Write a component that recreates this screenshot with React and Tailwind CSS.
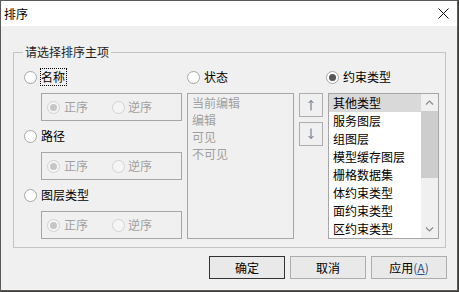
import React from 'react'

const font = { fontFamily: '"Noto Sans CJK SC", "Microsoft YaHei", sans-serif' }

function Radio({ checked, disabled }) {
    const ring = disabled ? 'border-[#d2d2d2] bg-[#f5f5f5]' : 'border-[#a6a6a6] bg-white'
    const dot = disabled ? 'bg-[#c6c6c6]' : 'bg-[#555555]'
    return (
        <span className={`flex h-[13px] w-[13px] shrink-0 items-center justify-center rounded-full border ${ring}`}>
            {checked && <span className={`h-[7px] w-[7px] rounded-full ${dot}`} />}
        </span>
    )
}

function RadioRow({ label, checked, focused }) {
    return (
        <div className="flex h-[16px] items-center">
            <Radio checked={checked} />
            <span className={`ml-[3px] flex h-[18px] items-center border pr-[1px] leading-[16px] text-black ${focused ? 'border-dotted border-black' : 'border-transparent'}`}>
                {label}
            </span>
        </div>
    )
}

function OrderBox() {
    return (
        <div className="ml-[17px] mt-[8px] flex h-[28px] w-[141px] items-center border border-[#a6a6a6] pl-[5px] text-[#a0a0a0]">
            <div className="flex w-[65px] items-center">
                <Radio checked disabled />
                <span className="ml-[4px]">正序</span>
            </div>
            <div className="flex items-center">
                <Radio disabled />
                <span className="ml-[3px]">逆序</span>
            </div>
        </div>
    )
}

function Arrow({ up }) {
    return (
        <svg width="8" height="12" viewBox="0 0 8 12" fill="none" stroke="#5f6b7a" strokeWidth="1">
            {up ? (
                <path d="M4 1.5V11.5M1.5 4L4 1.5L6.5 4" />
            ) : (
                <path d="M4 0.5V10.5M1.5 8L4 10.5L6.5 8" />
            )}
        </svg>
    )
}

function Chevron({ up }) {
    return (
        <svg width="9" height="5" viewBox="0 0 9 5" fill="none" stroke="#8a8a8a" strokeWidth="1.2">
            {up ? <path d="M1 4.5L4.5 1L8 4.5" /> : <path d="M1 0.5L4.5 4L8 0.5" />}
        </svg>
    )
}

const types = ['其他类型', '服务图层', '组图层', '模型缓存图层', '栅格数据集', '体约束类型', '面约束类型', '区约束类型']
const states = ['当前编辑', '编辑', '可见', '不可见']

export default function App() {
    return (
        <div className="h-[292px] w-[459px] bg-[#3f3e38] text-[12px]" style={font}>
            <div className="flex h-[291px] w-[458px] flex-col border border-[#5a5a5a] bg-[#f0f0f0]">
                <div className="flex h-[25px] items-center justify-between bg-white pl-[3px] pr-[8px] text-black">
                    <span className="leading-[16px]">排序</span>
                    <svg width="11" height="11" viewBox="0 0 11 11" stroke="#111" strokeWidth="1">
                        <path d="M0.5 0.5L10.5 10.5M10.5 0.5L0.5 10.5" />
                    </svg>
                </div>

                <fieldset className="ml-[12px] mt-[18px] h-[204px] w-[433px] border border-[#c4c4c4]">
                    <legend className="ml-[9px] px-[2px] leading-[16px] text-[#222]">请选择排序主项</legend>
                    <div className="mt-[9px] flex pl-[10px]">
                        <div className="w-[158px]">
                            <RadioRow label="名称" focused />
                            <OrderBox />
                            <div className="mt-[7px]">
                                <RadioRow label="路径" />
                            </div>
                            <OrderBox />
                            <div className="mt-[7px]">
                                <RadioRow label="图层类型" />
                            </div>
                            <OrderBox />
                        </div>

                        <div className="ml-[5px] w-[107px]">
                            <RadioRow label="状态" />
                            <div className="mt-[8px] h-[146px] border border-[#a6a6a6] pl-[4px] leading-[17px] text-[#a0a0a0]">
                                {states.map((s) => (
                                    <div key={s}>{s}</div>
                                ))}
                            </div>
                        </div>

                        <div className="ml-[5px] flex w-[24px] flex-col gap-[5px] pt-[24px]">
                            <div className="flex h-[24px] items-center justify-center border border-[#adadad] bg-[#f0f0f0]">
                                <Arrow up />
                            </div>
                            <div className="flex h-[24px] items-center justify-center border border-[#adadad] bg-[#f0f0f0]">
                                <Arrow />
                            </div>
                        </div>

                        <div className="ml-[3px]">
                            <RadioRow label="约束类型" checked />
                            <div className="ml-[2px] mt-[8px] flex h-[146px] w-[111px] border border-[#a6a6a6] bg-white">
                                <div className="flex-1 overflow-hidden">
                                    {types.map((t, i) => (
                                        <div key={t} className={`h-[18px] pl-[4px] leading-[18px] text-black ${i === 0 ? 'bg-[#d9d9d9]' : ''}`}>
                                            {t}
                                        </div>
                                    ))}
                                </div>
                                <div className="flex w-[17px] flex-col bg-[#f0f0f0]">
                                    <div className="flex h-[17px] items-center justify-center">
                                        <Chevron up />
                                    </div>
                                    <div className="h-[67px] bg-[#cdcdcd]" />
                                    <div className="flex-1" />
                                    <div className="flex h-[17px] items-center justify-center">
                                        <Chevron />
                                    </div>
                                </div>
                            </div>
                        </div>
                    </div>
                </fieldset>

                <div className="mt-[8px] flex justify-end gap-[5px] pr-[10px] text-black">
                    <button className="h-[23px] w-[76px] border border-[#333333] bg-[#e9e9e9]">确定</button>
                    <button className="h-[23px] w-[76px] border border-[#adadad] bg-[#e9e9e9]">取消</button>
                    <button className="h-[23px] w-[76px] border border-[#adadad] bg-[#e9e9e9]">
                        应用<span className="text-[#2b4f8a]">(<span className="underline">A</span>)</span>
                    </button>
                </div>
            </div>
        </div>
    )
}
